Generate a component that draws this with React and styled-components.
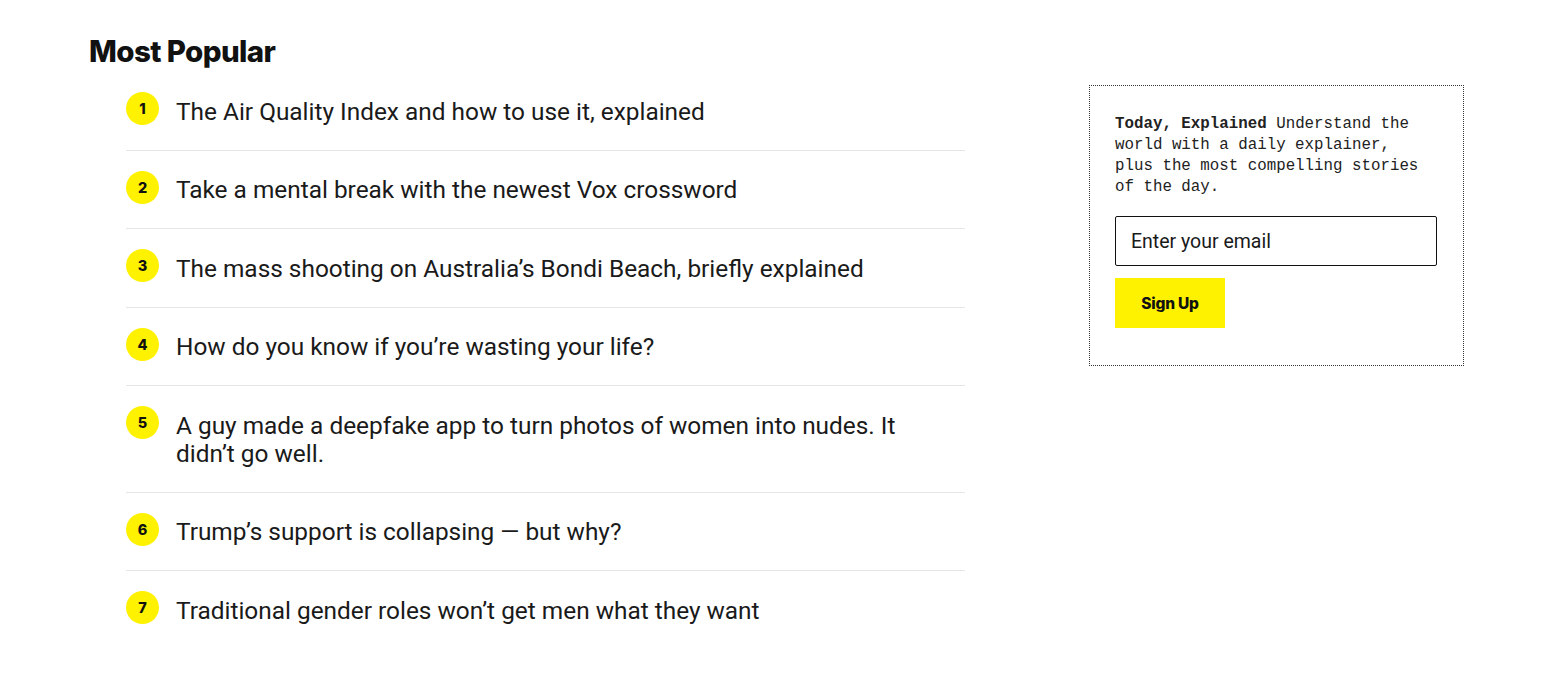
import styled, { createGlobalStyle } from "styled-components";

const GlobalStyle = createGlobalStyle`
  body {
    margin: 0;
    background: #fff;
    color: #1a1a1a;
    font-family: Roboto, "Liberation Sans", sans-serif;
  }
`;

const Page = styled.div`
  display: flex;
  align-items: flex-start;
  gap: 124px;
  padding: 34px 0 40px 89px;
`;

const Main = styled.section`
  width: 876px;
`;

const Heading = styled.h2`
  margin: 0 0 4px;
  font-family: Inter, Roboto, sans-serif;
  font-size: 29.5px;
  line-height: 34px;
  font-weight: 800;
  letter-spacing: -0.6px;
  color: #111;
`;

const List = styled.ol`
  list-style: none;
  margin: 0 0 0 37px;
  padding: 0;
`;

const Item = styled.li`
  display: flex;
  align-items: flex-start;
  gap: 17px;
  padding: 20px 0 24px;
  border-bottom: 1px solid ${(p) => (p.last ? "transparent" : "#e6e6e6")};
`;

const Num = styled.span`
  flex: none;
  width: 33px;
  height: 33px;
  border-radius: 50%;
  background: #fff200;
  display: flex;
  align-items: center;
  justify-content: center;
  font-family: Inter, Roboto, sans-serif;
  font-weight: 800;
  font-size: 14.5px;
  color: #111;
`;

const Title = styled.a`
  margin-top: 5.5px;
  max-width: 750px;
  font-size: 24.4px;
  line-height: 28px;
  color: #1a1a1a;
  text-decoration: none;
`;

const Signup = styled.aside`
  margin-top: 51px;
  width: 375px;
  box-sizing: border-box;
  border: 1px dotted #333;
  padding: 28px 26px 37px 25px;
`;

const Blurb = styled.p`
  margin: 0 0 18px;
  max-width: 318px;
  font-family: "Liberation Mono", "DejaVu Sans Mono", monospace;
  font-size: 15.8px;
  line-height: 21px;
  color: #222;

  strong {
    font-weight: 700;
  }
`;

const Email = styled.input`
  display: block;
  width: 100%;
  height: 50px;
  box-sizing: border-box;
  border: 1px solid #111;
  border-radius: 2px;
  padding: 0 15px;
  font-family: Roboto, "Liberation Sans", sans-serif;
  font-size: 19.5px;
  color: #111;
  outline: none;

  &::placeholder {
    color: #1a1a1a;
  }
`;

const Button = styled.button`
  display: block;
  margin-top: 12px;
  width: 110px;
  height: 50px;
  border: none;
  background: #fff200;
  font-family: Inter, Roboto, sans-serif;
  font-weight: 800;
  font-size: 15.5px;
  letter-spacing: -0.2px;
  color: #111;
  cursor: pointer;
`;

const stories = [
  "The Air Quality Index and how to use it, explained",
  "Take a mental break with the newest Vox crossword",
  "The mass shooting on Australia\u2019s Bondi Beach, briefly explained",
  "How do you know if you\u2019re wasting your life?",
  "A guy made a deepfake app to turn photos of women into nudes. It didn\u2019t go well.",
  "Trump\u2019s support is collapsing \u2014 but why?",
  "Traditional gender roles won\u2019t get men what they want",
];

export default function App() {
  return (
    <>
      <GlobalStyle />
      <Page>
        <Main>
          <Heading>Most Popular</Heading>
          <List>
            {stories.map((s, i) => (
              <Item key={i} last={i === stories.length - 1}>
                <Num>{i + 1}</Num>
                <Title href="#">{s}</Title>
              </Item>
            ))}
          </List>
        </Main>
        <Signup>
          <Blurb>
            <strong>Today, Explained</strong> Understand the world with a daily
            explainer, plus the most compelling stories of the day.
          </Blurb>
          <Email placeholder="Enter your email" />
          <Button>Sign Up</Button>
        </Signup>
      </Page>
    </>
  );
}
